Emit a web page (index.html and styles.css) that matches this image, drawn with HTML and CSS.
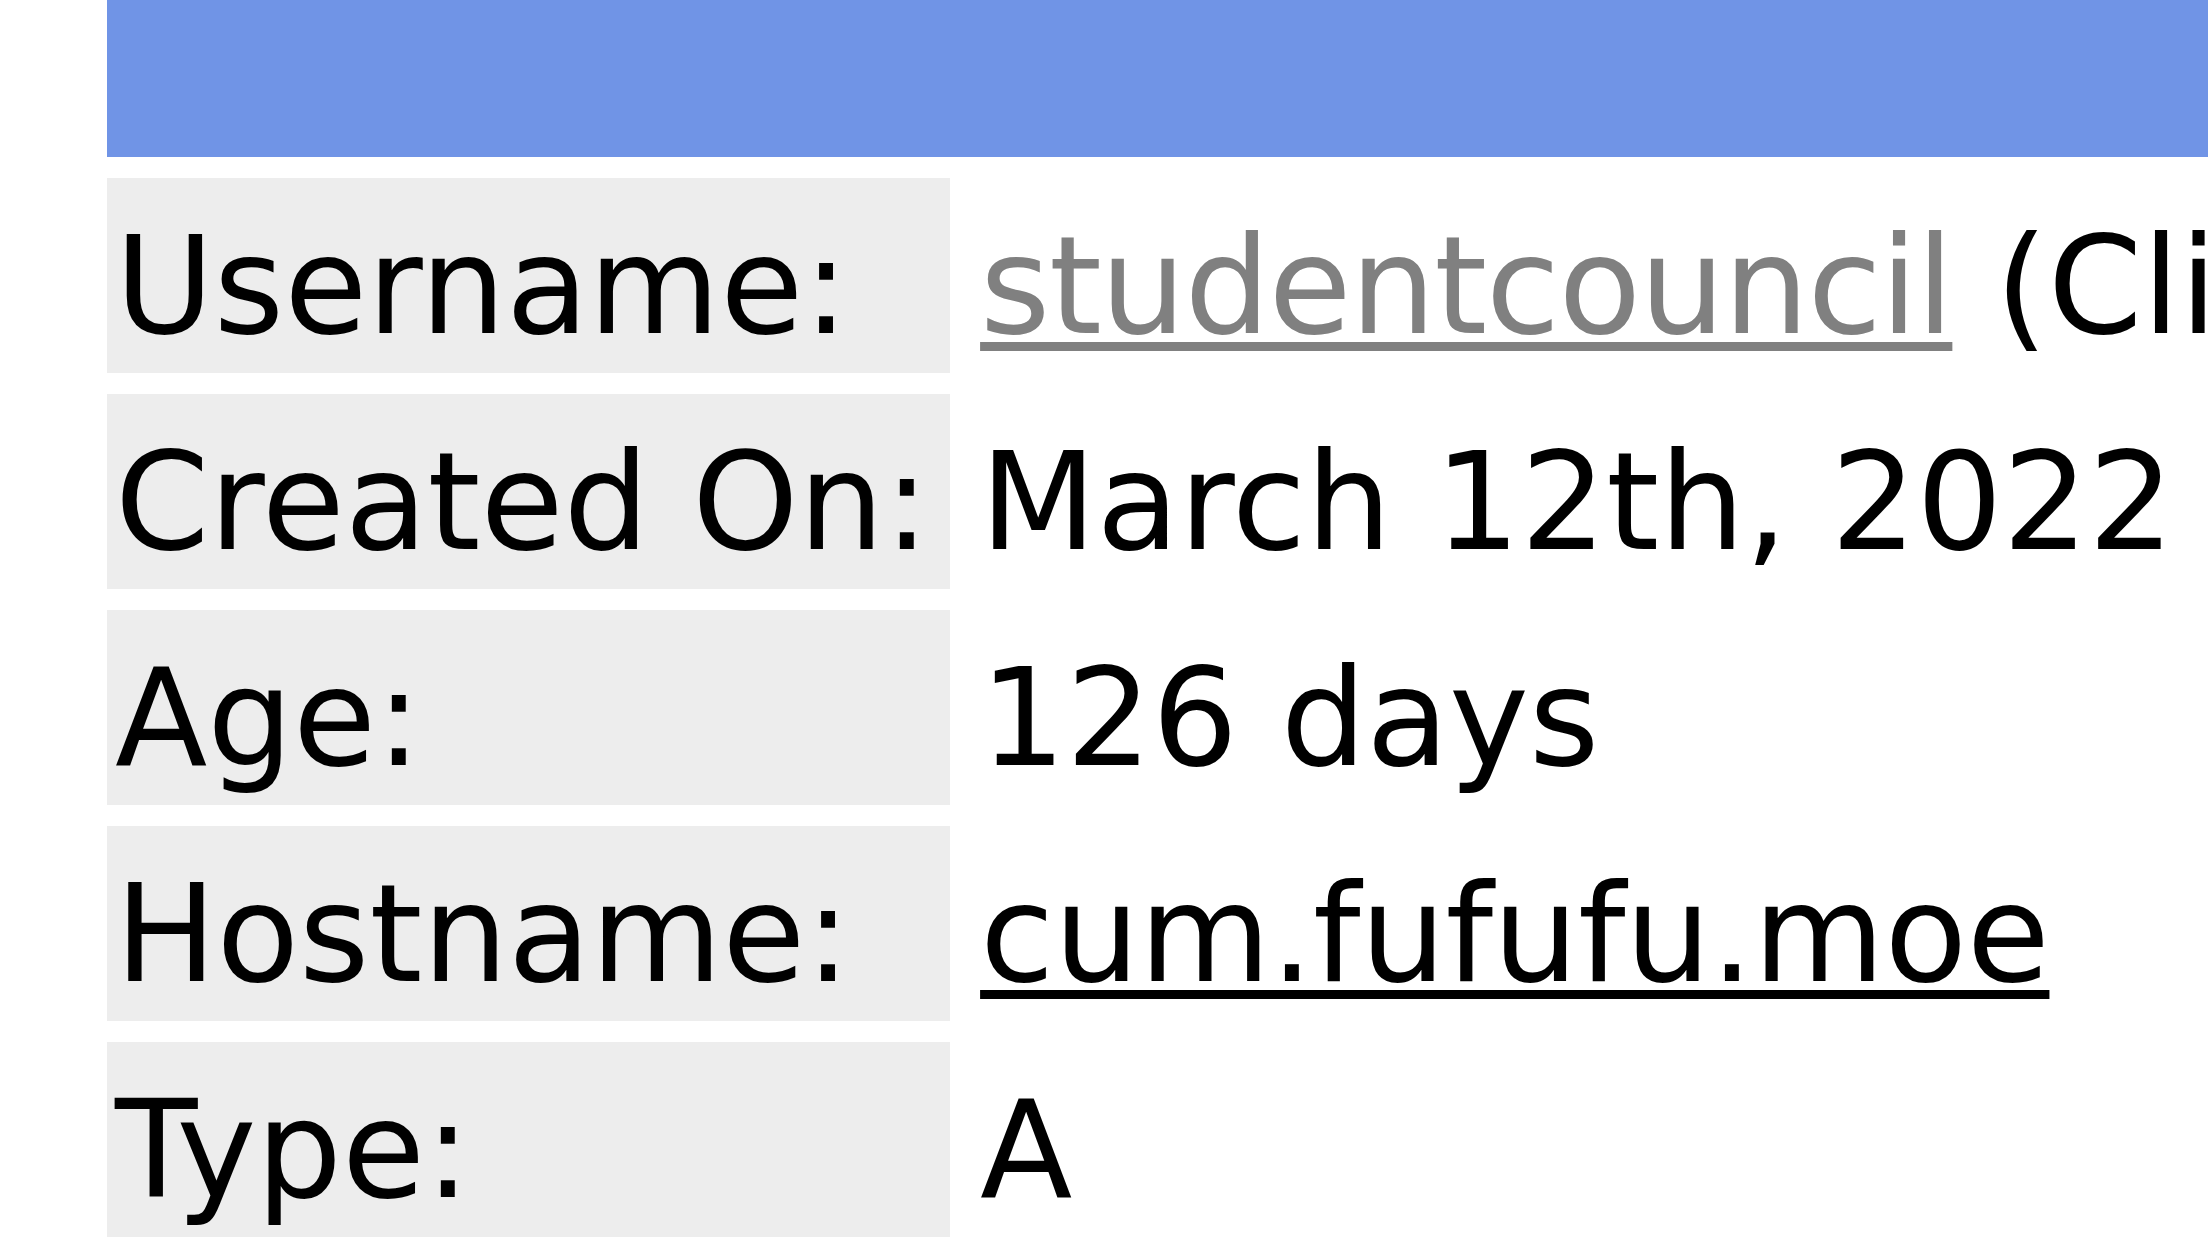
FILE: index.html
```html
<!DOCTYPE html>
<html lang="en">
<head>
<meta charset="utf-8">
<title>Record</title>
<link rel="stylesheet" href="styles.css">
</head>
<body>
<div class="page">
  <div class="header-bar"></div>
  <div class="info">
    <div class="row">
      <div class="label">Username:</div>
      <div class="value"><a class="user-link" href="#">studentcouncil</a> (Click to view profile)</div>
    </div>
    <div class="row">
      <div class="label">Created On:</div>
      <div class="value">March 12th, 2022</div>
    </div>
    <div class="row">
      <div class="label">Age:</div>
      <div class="value">126 days</div>
    </div>
    <div class="row">
      <div class="label">Hostname:</div>
      <div class="value"><a class="host-link" href="#">cum.fufufu.moe</a></div>
    </div>
    <div class="row">
      <div class="label">Type:</div>
      <div class="value">A</div>
    </div>
  </div>
</div>
</body>
</html>
```

FILE: styles.css
```css
html, body {
  margin: 0;
  padding: 0;
  overflow: hidden;
  background: #ffffff;
}

.page {
  padding-left: 107px;
  display: flex;
  flex-direction: column;
  gap: 21px;
  font-family: "DejaVu Sans", Verdana, sans-serif;
  font-size: 135px;
  color: #000000;
}

.header-bar {
  height: 156.7px;
  background: #7094e6;
}

.info {
  display: flex;
  flex-direction: column;
  gap: 21.1px;
}

.row {
  display: grid;
  grid-template-columns: 843.3px auto;
  column-gap: 21.3px;
  height: 195px;
}

.label,
.value {
  box-sizing: border-box;
  height: 195px;
  padding: 30px 0 0 8px;
  line-height: normal;
  white-space: nowrap;
}

.label {
  background: #ededed;
}

.value {
  padding-left: 8.5px;
}

.user-link,
.host-link {
  text-decoration: underline;
  text-decoration-thickness: 8.5px;
  text-underline-offset: 9.4px;
}

.user-link {
  color: #808080;
  letter-spacing: -1.5px;
}

.host-link {
  color: #000000;
  letter-spacing: -0.3px;
}
```
